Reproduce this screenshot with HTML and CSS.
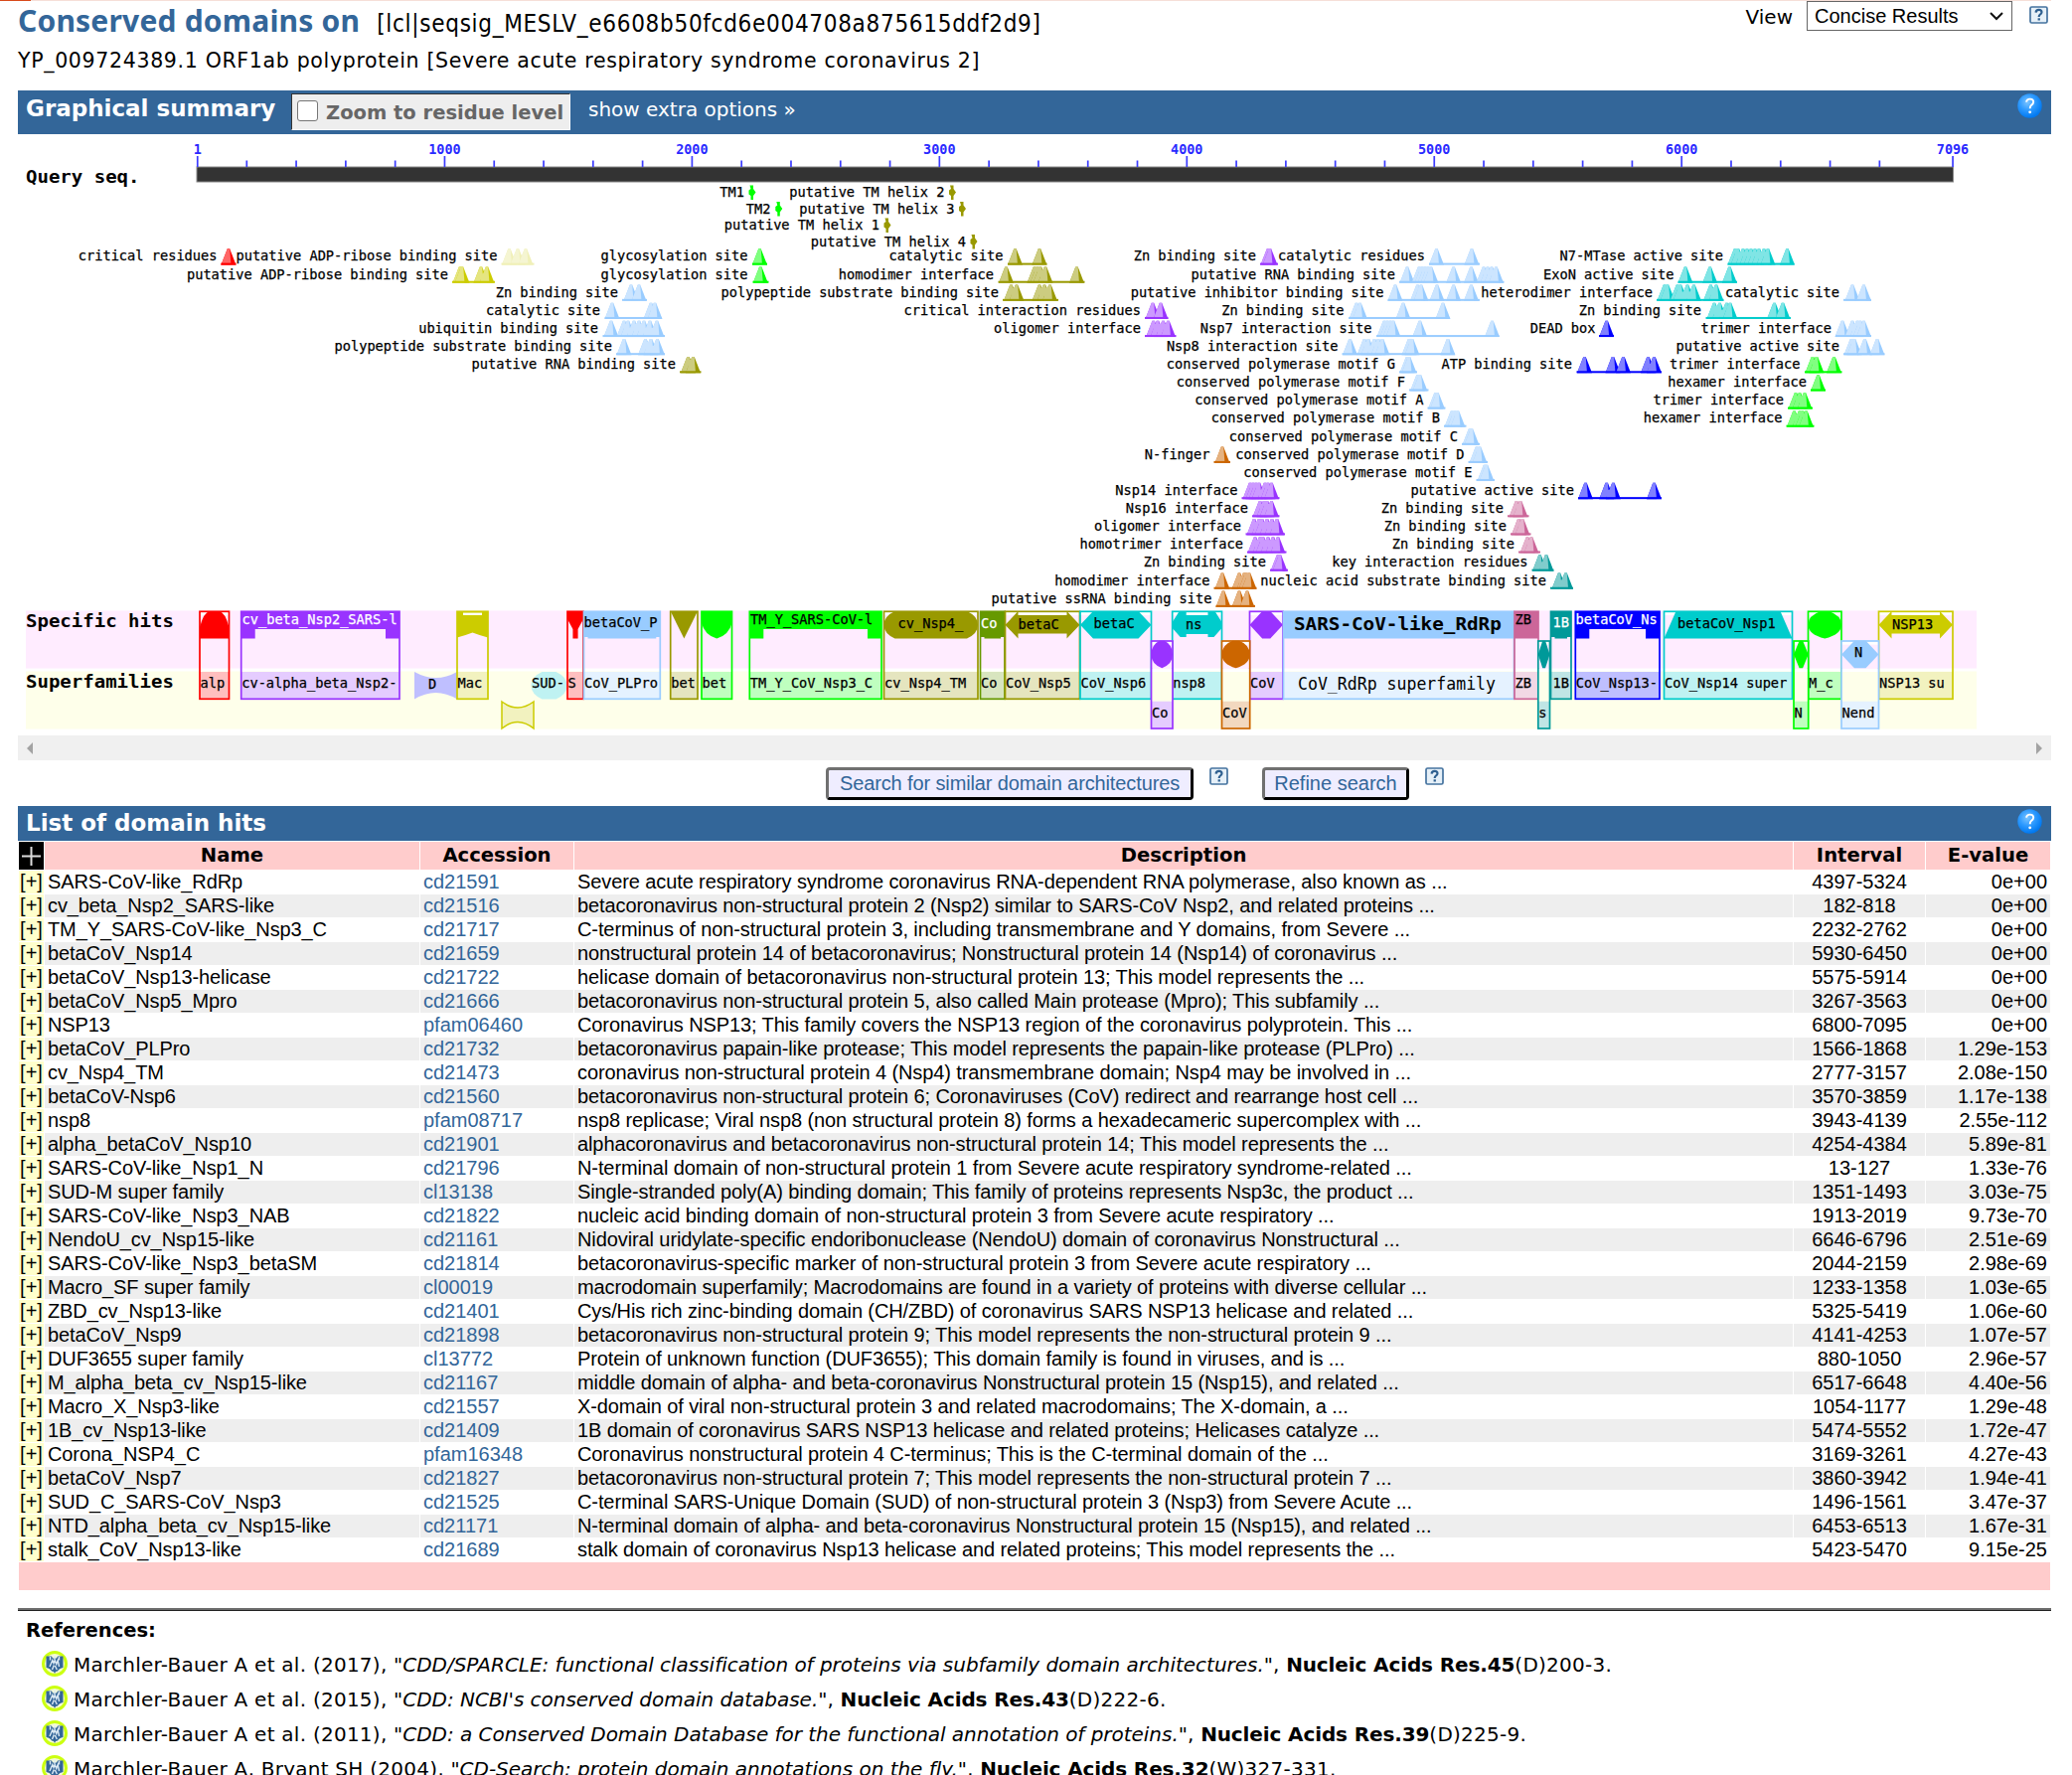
FILE: index.html
```html
<!DOCTYPE html>
<html lang="en">
<head>
<meta charset="utf-8">
<title>Conserved domains</title>
<link rel="stylesheet" href="styles.css">
</head>
<body>
<svg class="defs" aria-hidden="true">
  <defs>
    <radialGradient id="ball" cx="0.4" cy="0.35" r="0.65"><stop offset="0" stop-color="#7cc4ff"/><stop offset="0.5" stop-color="#2f9bff"/><stop offset="1" stop-color="#0078f0"/></radialGradient>
    <symbol id="round-help" viewBox="0 0 25 25"><circle cx="12.500" cy="12.500" r="12.200" fill="url(#ball)"/><path d="M9 8.600q.5-3 3.700-3 3.500 0 3.500 3 0 1.800-2 3.200-1.500 1.100-1.500 3.400" fill="none" stroke="#fff" stroke-width="1.900"/><circle cx="12.700" cy="18.800" r="1.400" fill="#fff"/></symbol>
    <symbol id="box-help" viewBox="0 0 19 18"><rect x="1" y="1" width="17" height="16" rx="1.500" fill="#e6f0f8" stroke="#45739f" stroke-width="1.700"/><path d="M6.600 6.600q.2-2.700 3-2.700 2.900 0 2.900 2.400 0 1.400-1.600 2.300-1.200.8-1.200 2.400" fill="none" stroke="#2f6090" stroke-width="2.200"/><rect x="8.600" y="12.300" width="2.300" height="2.200" fill="#2f6090"/></symbol>
    <symbol id="ref-logo" viewBox="0 0 26 26"><circle cx="13" cy="13" r="11.500" fill="#f4fad8" stroke="#ccff11" stroke-width="3"/><path d="M4.500 5.500h5.500l1 2h4l1-2h5.500v11.500q-4 .5-5.500 3.500l-2 .5-1 2-1-2-2-.5Q8.500 17.500 4.500 17z" fill="#336699"/><path d="M8.500 6v3.500M13 5v4M17.500 6v3.500M8 16l2.800-6.500 1.200 3 1.200-3 1.500 4 1.500-4 1.300 6.500M10.500 19l1.800-4.500M13.300 15l2 4" fill="none" stroke="#dceaf4" stroke-width="1.400"/></symbol>
  </defs>
</svg>
<div class="topline"><span></span></div>
<main class="page">
  <header class="head">
    <div class="titles">
      <h1><span class="title">Conserved domains on</span><span class="seqid">[lcl|seqsig_MESLV_e6608b50fcd6e004708a875615ddf2d9]</span></h1>
      <p class="defline">YP_009724389.1 ORF1ab polyprotein [Severe acute respiratory syndrome coronavirus 2]</p>
    </div>
    <div class="view">
      <span class="view-label">View</span>
      <div class="select"><span>Concise Results</span><svg width="14" height="9" viewBox="0 0 14 9"><path d="M1 1l6 6 6-6" fill="none" stroke="#111" stroke-width="2"/></svg></div>
      <svg class="box-help"><use href="#box-help"/></svg>
    </div>
  </header>

  <section class="bar graph-bar">
    <h2>Graphical summary</h2>
    <label class="zoom"><span class="check"></span><span class="zoom-text">Zoom to residue level</span></label>
    <a class="extra">show extra options »</a>
    <svg class="round-help"><use href="#round-help"/></svg>
  </section>
  <svg id="map" class="map" viewBox="18 135 2046 605"></svg>
  <div class="scroll"><i class="left"></i><i class="right"></i></div>

  <div class="actions">
    <button class="search">Search for similar domain architectures</button>
    <svg class="box-help"><use href="#box-help"/></svg>
    <button class="refine">Refine search</button>
    <svg class="box-help"><use href="#box-help"/></svg>
  </div>

  <section class="bar list-bar">
    <h2>List of domain hits</h2>
    <svg class="round-help"><use href="#round-help"/></svg>
  </section>
  <table class="hits">
    <colgroup><col class="c-plus"><col class="c-name"><col class="c-acc"><col class="c-desc"><col class="c-int"><col class="c-ev"></colgroup>
    <thead><tr><th class="expand"><svg width="19" height="19" viewBox="0 0 19 19"><path d="M9.500 0v19M0 9.500h19" stroke="#ddd" stroke-width="2"/></svg></th><th>Name</th><th>Accession</th><th>Description</th><th>Interval</th><th>E-value</th></tr></thead>
    <tbody id="rows"></tbody>
    <tfoot><tr><td colspan="6"></td></tr></tfoot>
  </table>
  <hr>
  <section class="refs">
    <h3>References:</h3>
    <ul>
      <li><svg><use href="#ref-logo"/></svg><p>Marchler-Bauer A et al. (2017), <i>"CDD/SPARCLE: functional classification of proteins via subfamily domain architectures."</i>, <b>Nucleic Acids Res.45</b>(D)200-3.</p></li>
      <li><svg><use href="#ref-logo"/></svg><p>Marchler-Bauer A et al. (2015), <i>"CDD: NCBI's conserved domain database."</i>, <b>Nucleic Acids Res.43</b>(D)222-6.</p></li>
      <li><svg><use href="#ref-logo"/></svg><p>Marchler-Bauer A et al. (2011), <i>"CDD: a Conserved Domain Database for the functional annotation of proteins."</i>, <b>Nucleic Acids Res.39</b>(D)225-9.</p></li>
      <li><svg><use href="#ref-logo"/></svg><p>Marchler-Bauer A, Bryant SH (2004), <i>"CD-Search: protein domain annotations on the fly."</i>, <b>Nucleic Acids Res.32</b>(W)327-331.</p></li>
    </ul>
  </section>
</main>
<script src="script.js"></script>
</body>
</html>
```
FILE: styles.css
```css
* { box-sizing: border-box; }
html, body { margin: 0; padding: 0; }
body { height: 1786px; overflow: hidden; background: #fff; color: #000; font-family: "DejaVu Sans", Verdana, sans-serif; font-size: 20px; }
h1, h2, h3, p, ul { margin: 0; padding: 0; font-weight: normal; }
.defs { display: block; width: 0; height: 0; }
.topline { height: 1px; background: #f6dfd8; margin-right: 21px; }
.topline span { display: block; width: 31px; height: 1px; background: #d84a1b; }
.page { width: 2046px; margin-left: 18px; }

.head { display: flex; justify-content: space-between; height: 90px; }
.head h1 { display: flex; align-items: baseline; gap: 17px; height: 45px; line-height: 40px; white-space: nowrap; }
.title { font: bold 30px/40px "Noto Sans", sans-serif; color: #336699; letter-spacing: .2px; }
.seqid { font-family: "DejaVu Sans Condensed", "DejaVu Sans", sans-serif; font-stretch: condensed; font-size: 24px; letter-spacing: .7px; }
.defline { font-size: 20.500px; letter-spacing: .67px; line-height: 30px; white-space: nowrap; }
.view { display: flex; align-items: flex-start; padding-right: 3px; }
.view-label { font: 20px/32px "DejaVu Sans", sans-serif; margin-right: 14px; }
.select { display: flex; align-items: center; justify-content: space-between; width: 207px; height: 30px; padding: 0 8px 0 7px; border: 1px solid #666; font: 20px "Liberation Sans", Arial, sans-serif; }
.view .box-help { margin: 5px 0 0 17px; }
.box-help { width: 19px; height: 18px; display: block; }
.round-help { width: 25px; height: 25px; display: block; margin-left: auto; }

.bar { display: flex; background: #336699; color: #fff; padding: 0 9px 0 8px; white-space: nowrap; }
.bar h2 { font-size: 23px; font-weight: bold; }
.graph-bar { height: 44px; }
.graph-bar h2 { line-height: 36px; width: 267px; }
.graph-bar .round-help { margin-top: 3px; }
.zoom { display: flex; align-items: center; width: 281px; height: 37px; margin-top: 3px; padding-left: 5px; background: #eee; border: 1px solid #fff; border-top-color: #333; border-left-color: #333; color: #666; font-size: 19.500px; font-weight: bold; }
.check { width: 21px; height: 21px; border: 1px solid #767676; border-radius: 3px; background: #fff; margin: 0 8px 3px 0; }
.zoom-text { padding-top: 2px; }
.extra { margin-left: 18px; line-height: 38px; }

.map { display: block; width: 2046px; height: 605px; font-family: "DejaVu Sans Mono", monospace; font-size: 13.500px; }
.map text { white-space: pre; }
.map .label { stroke: currentColor; stroke-width: .25px; }
.map .num { font-weight: bold; }
.map .big { font-size: 18px; }
.map .strong { font-weight: bold; }
.scroll { display: flex; justify-content: space-between; align-items: center; height: 25px; padding: 0 9px; background: #f0f0f0; }
.scroll i { border: 6px solid transparent; }
.scroll .left { border-right-color: #a3a3a3; border-left-width: 0; }
.scroll .right { border-left-color: #a3a3a3; border-right-width: 0; }

.actions { display: flex; height: 46px; padding: 7px 0 0 813px; }
.actions button { height: 33px; padding: 0; border: 3px outset #333; border-color: #707070 #1f1f24 #1f1f24 #707070; border-radius: 4px; background: #efedff; color: #336699; font: 20px "Liberation Sans", Arial, sans-serif; white-space: nowrap; }
.actions .search { width: 370px; letter-spacing: -.12px; }
.refine { width: 148px; margin-left: 34px; }
.actions .box-help { margin-left: 16px; }

.list-bar { height: 35px; }
.list-bar h2 { line-height: 34px; }
.list-bar .round-help { margin-top: 3px; }

.hits { width: 2046px; table-layout: fixed; border-collapse: separate; border-spacing: 1px; font: 20px/23px "Liberation Sans", Arial, sans-serif; }
.hits th, .hits td { padding: 0 3px; overflow: hidden; white-space: nowrap; }
.hits th { height: 28px; background: #ffcccc; font: bold 19.600px/28px "DejaVu Sans", Verdana, sans-serif; padding: 0; }
.hits .expand { background: #000; line-height: 0; }
.c-plus { width: 25px; } .c-name { width: 377px; } .c-acc { width: 154px; } .c-desc { width: 1226px; } .c-int { width: 132px; }
.hits td { height: 23px; }
.hits tbody tr:nth-child(even) td { background: #eee; }
.hits tbody tr td:first-child { background: #ffffcc; padding: 0; text-align: center; }
.hits td:nth-child(2), .hits td:nth-child(4) { letter-spacing: -.1px; }
.hits td:nth-child(3) { color: #336699; }
.hits td:nth-child(5) { text-align: center; }
.hits td:nth-child(6) { text-align: right; }
.hits tfoot td { height: 28px; background: #ffcccc; }

hr { height: 3px; margin: 17px 0 0; border: 0; background: #6b6b6b; border-bottom: 1px solid #222; }
.refs { padding-left: 8px; }
.refs h3 { font-size: 19.500px; font-weight: bold; line-height: 24px; padding-top: 8px; height: 37px; }
.refs ul { list-style: none; }
.refs li { display: flex; height: 35px; padding-left: 16px; white-space: nowrap; }
.refs li svg { width: 26px; height: 26px; margin: 3px 6px 0 0; flex: none; }
.refs li p { line-height: 35px; letter-spacing: .25px; }
.refs i { letter-spacing: -.03px; }
.refs b { letter-spacing: -.12px; }
```
FILE: script.js
```js
const INK = {
  red: ['#ff0000', '#ff6666', '#ffbfbf'], purple: ['#9933ff', '#cc99ff', '#e5ccff'],
  pale: ['#f0f0b8', '#f5f5d2', '#f5f5d2'], yellow: ['#cccc00', '#e5e580', '#f2f2bf'],
  sky: ['#99ccff', '#cce5ff', '#e5f2ff'], olive: ['#999900', '#cccc80', '#e5e5bf'],
  green: ['#00ff00', '#80ff80', '#bfffbf'], moss: ['#669900', '#b2cc80', '#d8e5bf'],
  aqua: ['#00cccc', '#80e5e5', '#bff2f2'], orange: ['#cc6600', '#e5b280', '#f2d8bf'],
  pink: ['#cc6699', '#e5b2cc', '#f2d8e5'], teal: ['#009999', '#80cccc', '#bfe5e5'],
  blue: ['#0000ff', '#8080ff', '#bfbfff']
};
const PITCH = 8.22;
const out = [];
const put = s => out.push(s);
const rect = (x, y, w, h, fill, extra = '') => put(`<rect x="${x}" y="${y}" width="${w}" height="${h}" fill="${fill}" ${extra}/>`);
const poly = (pts, fill) => put(`<polygon points="${pts}" fill="${fill}"/>`);
const text = (s, x, y, pitch = PITCH, cls = 'label', fill = '#000') =>
  put(`<text x="${x}" y="${y}" textLength="${s.length * pitch}" lengthAdjust="spacingAndGlyphs" class="${cls}" fill="${fill}" color="${fill}">${s}</text>`);

/* background bands */
rect(26, 614.5, 1963, 58, '#ffecff');
rect(26, 675.5, 1963, 58, '#feffea');

/* ruler */
const at = n => 198.7 + (n - 1) * 1766.3 / 7095;
rect(198, 168, 1767.5, 15, '#333', 'stroke="#888" stroke-width="1"');
const tick = (n, top) => rect(at(n) - 0.8, top, 1.7, 168 - top, '#3c3cff');
for (let n = 200; n < 7096; n += 200) if (n % 1000) tick(n, 161.5);
[1, 1000, 2000, 3000, 4000, 5000, 6000, 7096].forEach(n => {
  tick(n, 157);
  text(String(n), at(n) - String(n).length * 4.05, 154.7, 8.1, 'num', '#2a2aff');
});
text('Query seq.', 26, 184, 11.45, 'big strong');
text('Specific hits', 26, 631, 11.45, 'big strong');
text('Superfamilies', 26, 692, 11.45, 'big strong');

/* transmembrane helices: row, label, label end, marker x, ink */
[[0, 'TM1', 749, 756.5, 'green'], [0, 'putative TM helix 2', 950.5, 958, 'olive'],
 [1, 'TM2', 775.5, 783.3, 'green'], [1, 'putative TM helix 3', 960.5, 968, 'olive'],
 [2, 'putative TM helix 1', 885, 892.5, 'olive'], [3, 'putative TM helix 4', 972, 979.5, 'olive']
].forEach(([r, s, end, x, ink]) => {
  const y = 186.5 + r * 16.5;
  text(s, end - s.length * PITCH, y + 11.5);
  poly(`${x - 2},${y} ${x + 1.5},${y} ${x + 1.5},${y + 3.5} ${x + 4},${y + 7} ${x + 1.5},${y + 10.5} ${x + 1.5},${y + 14.5} ${x - 1},${y + 14.5} ${x - 1},${y + 10.5} ${x - 3},${y + 9} ${x - 3},${y + 5} ${x - 1},${y + 3.5}`, INK[ink][0]);
});

/* feature sites: row, label, label end, ink, base start, base end, peaks */
[[0, 'critical residues', 218.5, 'red', 222.3, 237.5, [230]],
 [0, 'putative ADP-ribose binding site', 500.5, 'pale', 504.5, 537.5, [512.5, 521, 529]],
 [0, 'glycosylation site', 752.5, 'green', 757, 772, [764.5]],
 [0, 'catalytic site', 1009.5, 'olive', 1014, 1053.5, [1021.5, 1046]],
 [0, 'Zn binding site', 1264, 'purple', 1268, 1286, [1276, 1278]],
 [0, 'catalytic residues', 1434, 'sky', 1438, 1489, [1445.5, 1481]],
 [0, 'N7-MTase active site', 1734, 'aqua', 1738.5, 1805.5, [1746, 1749, 1754, 1758, 1762, 1766, 1770, 1775, 1779, 1798.5]],
 [1, 'putative ADP-ribose binding site', 451, 'yellow', 455, 498, [463, 465, 484, 490]],
 [1, 'glycosylation site', 752.5, 'green', 757.5, 773.5, [765.3]],
 [1, 'homodimer interface', 1000, 'olive', 1004.5, 1091.5, [1012.5, 1041, 1044, 1047, 1052, 1083.5]],
 [1, 'putative RNA binding site', 1404, 'sky', 1408, 1513.5, [1416, 1428, 1431, 1434, 1437, 1440, 1462.7, 1480.5, 1493, 1497, 1501, 1505.5]],
 [1, 'ExoN active site', 1684.5, 'aqua', 1688.5, 1748, [1696, 1720.7, 1740.4]],
 [2, 'Zn binding site', 622, 'sky', 626, 651, [635, 643]],
 [2, 'polypeptide substrate binding site', 1005, 'olive', 1009, 1065, [1017.5, 1023, 1046, 1051, 1056.5]],
 [2, 'putative inhibitor binding site', 1392.5, 'sky', 1396.5, 1489, [1404, 1426.5, 1430, 1446, 1462.7, 1480.5]],
 [2, 'heterodimer interface', 1663, 'aqua', 1667, 1734.500, [1675, 1678, 1688, 1691, 1698, 1704.5, 1721.5, 1727]],
 [2, 'catalytic site', 1851, 'sky', 1855, 1883, [1864, 1875.5]],
 [3, 'catalytic site', 604, 'sky', 608.5, 666, [616, 655, 659]],
 [3, 'critical interaction residues', 1148, 'purple', 1152, 1175.5, [1160, 1168]],
 [3, 'Zn binding site', 1352.5, 'sky', 1357, 1459, [1365, 1368.5, 1412, 1452]],
 [3, 'Zn binding site', 1712, 'aqua', 1716.500, 1802, [1725, 1730.5, 1737.5, 1741, 1785.5, 1794]],
 [4, 'ubiquitin binding site', 602, 'sky', 606.500, 669, [615, 628, 632, 638, 643, 648, 654, 661]],
 [4, 'oligomer interface', 1148, 'purple', 1152, 1183.500, [1160.7, 1165, 1170.5, 1175.5]],
 [4, 'Nsp7 interaction site', 1380.5, 'sky', 1385, 1508.500, [1393, 1396, 1399, 1402, 1428.8, 1501.5]],
 [4, 'DEAD box', 1605.5, 'blue', 1609, 1624, [1616.7]],
 [4, 'trimer interface', 1843, 'sky', 1847, 1883, [1854, 1864, 1869, 1872, 1875.5]],
 [5, 'polypeptide substrate binding site', 616, 'sky', 620, 669, [628, 649.5, 655, 661.5]],
 [5, 'Nsp8 interaction site', 1346.5, 'sky', 1350.5, 1464, [1358.5, 1373, 1377, 1383, 1387, 1391, 1418, 1421, 1457]],
 [5, 'putative active site', 1851, 'sky', 1855, 1896.500, [1863, 1866, 1876.5, 1889]],
 [6, 'putative RNA binding site', 680, 'olive', 684, 705.500, [692.5, 697.5]],
 [6, 'conserved polymerase motif G', 1404, 'sky', 1408, 1426, [1416, 1418]],
 [6, 'ATP binding site', 1582, 'blue', 1586.500, 1672, [1594.5, 1623, 1633.5, 1658.5, 1664.5]],
 [6, 'trimer interface', 1811.5, 'green', 1816, 1853.5, [1824, 1828, 1845.5]],
 [7, 'conserved polymerase motif F', 1414, 'sky', 1418, 1437.500, [1426.5, 1429]],
 [7, 'hexamer interface', 1818, 'green', 1822, 1837, [1829.6]],
 [8, 'conserved polymerase motif A', 1432.5, 'sky', 1436.500, 1454.5, [1444.5, 1446.5]],
 [8, 'trimer interface', 1795, 'green', 1799, 1824, [1807, 1811, 1816]],
 [9, 'conserved polymerase motif B', 1449, 'sky', 1453, 1475.500, [1461, 1464, 1467]],
 [9, 'hexamer interface', 1793.5, 'green', 1797.500, 1825.5, [1805.5, 1811, 1814, 1817.5]],
 [10, 'conserved polymerase motif C', 1467, 'sky', 1471, 1489, [1479, 1481]],
 [11, 'N-finger', 1217.5, 'orange', 1221.500, 1238, [1230]],
 [11, 'conserved polymerase motif D', 1473.5, 'sky', 1477.500, 1497, [1486, 1489]],
 [12, 'conserved polymerase motif E', 1481.5, 'sky', 1485.500, 1504, [1494, 1496]],
 [13, 'Nsp14 interface', 1245.5, 'purple', 1249.500, 1287.5, [1258, 1261, 1264, 1267, 1273, 1276, 1279.5]],
 [13, 'putative active site', 1584, 'blue', 1588, 1672, [1595.5, 1616.7, 1623.4, 1664.5]],
 [14, 'Nsp16 interface', 1256, 'purple', 1260, 1287.5, [1268, 1272, 1275, 1279.5]],
 [14, 'Zn binding site', 1513, 'pink', 1517, 1538.5, [1526, 1530]],
 [15, 'oligomer interface', 1249, 'purple', 1253.500, 1293, [1262, 1267, 1270, 1275, 1280, 1285]],
 [15, 'Zn binding site', 1516, 'pink', 1520, 1540.5, [1528.3, 1532]],
 [16, 'homotrimer interface', 1251, 'purple', 1255, 1294.5, [1263, 1268, 1271, 1276, 1281, 1286]],
 [16, 'Zn binding site', 1524, 'pink', 1528, 1550, [1537, 1541]],
 [17, 'Zn binding site', 1274, 'purple', 1278, 1296, [1286, 1288]],
 [17, 'key interaction residues', 1537.5, 'teal', 1541.500, 1563.5, [1549.5, 1556]],
 [18, 'homodimer interface', 1217.5, 'orange', 1221.500, 1264.5, [1230, 1247, 1252, 1254, 1257]],
 [18, 'nucleic acid substrate binding site', 1556, 'teal', 1560, 1583, [1569, 1575.6]],
 [19, 'putative ssRNA binding site', 1219.5, 'orange', 1223.500, 1263, [1231, 1247, 1255]]
].forEach(([row, s, end, ink, x1, x2, peaks]) => {
  const base = 266.6 + row * 18.12, top = base - 16.3, [dark, light] = INK[ink];
  text(s, end - s.length * PITCH, base - 4.2);
  peaks.forEach((x, i) => {
    poly(`${x - 7.5},${base} ${x - 1.2},${top} ${x + 1.2},${top} ${x + 7.5},${base}`, dark);
    poly(`${x - 7.5},${base} ${x - 1.2},${top} ${x + 1.2},${top} ${x + 2.5},${base}`, light);
    /* neighbouring peaks merge into one plateau */
    const gap = i ? x - peaks[i - 1] : 99;
    if (gap <= 7) {
      const cut = top + (gap > 5.5 ? 7 : gap > 3.2 ? 3 : 0), p = peaks[i - 1];
      poly(`${p},${cut} ${x},${cut} ${x},${base} ${p},${base}`, light);
    }
  });
  rect(x1, base - 2, x2 - x1, 2, dark);
});

/* domain silhouettes inside a w x h cell */
const SHAPES = {
  rect: (w, h) => `M0 0H${w}V${h}H0Z`,
  trim: (w, h) => `M0 0H${w}V${h - 1.5}H${w - 4}V${h}H4V${h - 1.5}H0Z`,
  dome: (w, h) => `M0 ${h}V16Q4 1 10 0H${w - 10}Q${w - 4} 1 ${w} 16V${h}Z`,
  bowl: (w, h) => `M0 0H${w}V12Q${w - 3} 24 ${w / 2} ${h}Q3 24 0 12Z`,
  bracket: (w, h) => `M0 0H${w}V${h}H${w - 14}V18H14V${h}H0Z`,
  pinch: (w, h) => `M0 0Q${w / 2} 12 ${w} 0V${h}Q${w / 2} ${h - 13} 0 ${h}Z`,
  mac: (w, h) => `M0 0H${w}V${h - 1}Q${w * .75} ${h - 3} ${w / 2} ${h - 6}Q${w / 4} ${h - 3} 0 ${h - 1}Z`,
  spike: (w, h) => `M0 0H${w}V8L${w * .66} 18V${h}H${w * .34}V18L0 8Z`,
  tri: (w, h) => `M0 0H${w}L${w / 2} ${h}Z`,
  pill: (w, h) => `M11 0H${w - 11}Q${w} 5 ${w} ${h / 2}Q${w} ${h - 5} ${w - 11} ${h}H11Q0 ${h - 5} 0 ${h / 2}Q0 5 11 0Z`,
  arrow: (w, h) => `M0 ${h / 2}L13 0V4H${w - 13}V0L${w} ${h / 2}L${w - 13} ${h}V${h - 5}H13V${h}Z`,
  hex: (w, h) => `M0 ${h / 2}L13 0H${w - 13}L${w} ${h / 2}L${w - 13} ${h}H13Z`,
  knob: (w, h) => `M0 11L7 0H14V4H${w - 14}V0H${w - 7}L${w} 11V17L${w - 8} 26H${w - 14}V23H14V26H8L0 17Z`,
  oval: (w, h) => `M0 ${h / 2}Q0 ${h * .15} ${w * .38} 0H${w * .62}Q${w} ${h * .15} ${w} ${h / 2}Q${w} ${h * .85} ${w / 2} ${h}Q0 ${h * .85} 0 ${h / 2}Z`,
  gem: (w, h) => `M0 ${h / 2}L${w * .38} 0H${w * .62}L${w} ${h / 2}L${w * .62} ${h}H${w * .38}Z`,
  trap: (w, h) => `M0 ${h}L12 0H${w - 12}L${w} ${h}Z`
};
const shape = (name, x, y, w, h, fill, extra = '') =>
  put(`<path transform="translate(${x} ${y})" d="${SHAPES[name](w, h)}" fill="${fill}" ${extra}/>`);

/* superfamily-only domains */
shape('pinch', 417, 676, 43, 27.5, '#bfbfff');
text('D', 431, 693);
shape('pinch', 505, 706, 32, 27, '#f2f2bf', 'stroke="#cccc00" stroke-width="1.500"');
shape('pill', 534.5, 676, 36, 27.500, '#bff2f2');
text('SUD-', 535, 692);

/* specific hits: x1, x2, ink, shape, hit label, label x, label y, label fill, superfamily label, lower lane */
[[201, 230.5, 'red', 'dome', '', 0, 0, '', 'alp'],
 [242.7, 402, 'purple', 'bracket', 'cv_beta_Nsp2_SARS-l', 243.5, 628, '#fff', 'cv-alpha_beta_Nsp2-'],
 [460, 491, 'yellow', 'mac', '', 0, 0, '', 'Mac'],
 [571, 587, 'red', 'spike', '', 0, 0, '', 'S'],
 [587.5, 664.3, 'sky', 'trim', 'betaCoV_P', 587.5, 631.3, '#000', 'CoV_PLPro'],
 [674.7, 702, 'olive', 'tri', '', 0, 0, '', 'bet'],
 [706, 736.5, 'green', 'bowl', '', 0, 0, '', 'bet'],
 [754.3, 887, 'green', 'bracket', 'TM_Y_SARS-CoV-l', 755, 628, '#000', 'TM_Y_CoV_Nsp3_C'],
 [889.5, 984, 'olive', 'pill', 'cv_Nsp4_', 903.5, 631.5, '#000', 'cv_Nsp4_TM'],
 [986.5, 1011, 'moss', 'trim', 'Co', 987, 631.5, '#fff', 'Co'],
 [1011.5, 1086.5, 'olive', 'arrow', 'betaC', 1024.5, 633, '#000', 'CoV_Nsp5'],
 [1087, 1158.5, 'aqua', 'hex', 'betaC', 1100.5, 631.5, '#000', 'CoV_Nsp6'],
 [1179.7, 1229.5, 'aqua', 'knob', 'ns', 1193, 633, '#000', 'nsp8'],
 [1257.5, 1291, 'purple', 'gem', '', 0, 0, '', 'CoV'],
 [1291.5, 1523.5, 'sky', 'rect', '', 0, 0, '', ''],
 [1524, 1548, 'pink', 'rect', 'ZB', 1524.5, 628, '#000', 'ZB'],
 [1560.5, 1581, 'teal', 'trim', '1B', 1562.5, 631, '#fff', '1B'],
 [1585.3, 1670, 'blue', 'bracket', 'betaCoV_Ns', 1585.5, 628, '#fff', 'CoV_Nsp13-'],
 [1674.500, 1803.5, 'aqua', 'trap', 'betaCoV_Nsp1', 1688, 631.5, '#000', 'CoV_Nsp14 super'],
 [1819.500, 1853, 'green', 'oval', '', 0, 0, '', 'M_c'],
 [1890.500, 1965, 'yellow', 'arrow', 'NSP13', 1904, 633, '#000', 'NSP13 su'],
 [1158.500, 1180, 'purple', 'oval', '', 0, 0, '', 'Co', 1],
 [1229.500, 1257.7, 'orange', 'oval', '', 0, 0, '', 'CoV', 1],
 [1547.800, 1559.5, 'teal', 'gem', '', 0, 0, '', 's', 1],
 [1805, 1819.7, 'green', 'gem', '', 0, 0, '', 'N', 1],
 [1853, 1890.500, 'sky', 'hex', 'N', 1866, 660.500, '#000', 'Nend', 1]
].forEach(([x1, x2, ink, name, hit, hx, hy, hfill, fam, low]) => {
  const [dark, , tint] = INK[ink], d = low ? 29.7 : 0, w = x2 - x1, y = 615 + d;
  if (low) { rect(x1, y, w, 28, '#ffecff'); rect(x1, 673, w, 3, '#fff'); rect(x1, 676, w, 29, '#feffea'); }
  if (/rect|trim|bracket|mac/.test(name) === false) rect(x1, y, w, 4, '#fff');
  rect(x1, 676 + d, w, 27, tint);
  shape(name, x1, y, w, 27.5, dark);
  if (name === 'mac') rect(x1 + 6, y + 1.5, w - 12, 2.5, '#fff');
  rect(x1, y + .3, w, 88, 'none', `stroke="${dark}" stroke-width="1.700"`);
  if (hit) text(hit, hx, hy, PITCH, 'label', hfill);
  if (fam) text(fam, x1 + (fam === '1B' ? 2 : .5), 692 + d);
});
text('SARS-CoV-like_RdRp', 1302, 634, 11.6, 'big strong');
text('CoV_RdRp superfamily', 1306, 693.500, 9.95, 'big');
document.getElementById('map').innerHTML = out.join('');

/* hit list */
const HITS = `SARS-CoV-like_RdRp|cd21591|Severe acute respiratory syndrome coronavirus RNA-dependent RNA polymerase, also known as ...|4397-5324|0e+00
cv_beta_Nsp2_SARS-like|cd21516|betacoronavirus non-structural protein 2 (Nsp2) similar to SARS-CoV Nsp2, and related proteins ...|182-818|0e+00
TM_Y_SARS-CoV-like_Nsp3_C|cd21717|C-terminus of non-structural protein 3, including transmembrane and Y domains, from Severe ...|2232-2762|0e+00
betaCoV_Nsp14|cd21659|nonstructural protein 14 of betacoronavirus; Nonstructural protein 14 (Nsp14) of coronavirus ...|5930-6450|0e+00
betaCoV_Nsp13-helicase|cd21722|helicase domain of betacoronavirus non-structural protein 13; This model represents the ...|5575-5914|0e+00
betaCoV_Nsp5_Mpro|cd21666|betacoronavirus non-structural protein 5, also called Main protease (Mpro); This subfamily ...|3267-3563|0e+00
NSP13|pfam06460|Coronavirus NSP13; This family covers the NSP13 region of the coronavirus polyprotein. This ...|6800-7095|0e+00
betaCoV_PLPro|cd21732|betacoronavirus papain-like protease; This model represents the papain-like protease (PLPro) ...|1566-1868|1.29e-153
cv_Nsp4_TM|cd21473|coronavirus non-structural protein 4 (Nsp4) transmembrane domain; Nsp4 may be involved in ...|2777-3157|2.08e-150
betaCoV-Nsp6|cd21560|betacoronavirus non-structural protein 6; Coronaviruses (CoV) redirect and rearrange host cell ...|3570-3859|1.17e-138
nsp8|pfam08717|nsp8 replicase; Viral nsp8 (non structural protein 8) forms a hexadecameric supercomplex with ...|3943-4139|2.55e-112
alpha_betaCoV_Nsp10|cd21901|alphacoronavirus and betacoronavirus non-structural protein 14; This model represents the ...|4254-4384|5.89e-81
SARS-CoV-like_Nsp1_N|cd21796|N-terminal domain of non-structural protein 1 from Severe acute respiratory syndrome-related ...|13-127|1.33e-76
SUD-M super family|cl13138|Single-stranded poly(A) binding domain; This family of proteins represents Nsp3c, the product ...|1351-1493|3.03e-75
SARS-CoV-like_Nsp3_NAB|cd21822|nucleic acid binding domain of non-structural protein 3 from Severe acute respiratory ...|1913-2019|9.73e-70
NendoU_cv_Nsp15-like|cd21161|Nidoviral uridylate-specific endoribonuclease (NendoU) domain of coronavirus Nonstructural ...|6646-6796|2.51e-69
SARS-CoV-like_Nsp3_betaSM|cd21814|betacoronavirus-specific marker of non-structural protein 3 from Severe acute respiratory ...|2044-2159|2.98e-69
Macro_SF super family|cl00019|macrodomain superfamily; Macrodomains are found in a variety of proteins with diverse cellular ...|1233-1358|1.03e-65
ZBD_cv_Nsp13-like|cd21401|Cys/His rich zinc-binding domain (CH/ZBD) of coronavirus SARS NSP13 helicase and related ...|5325-5419|1.06e-60
betaCoV_Nsp9|cd21898|betacoronavirus non-structural protein 9; This model represents the non-structural protein 9 ...|4141-4253|1.07e-57
DUF3655 super family|cl13772|Protein of unknown function (DUF3655); This domain family is found in viruses, and is ...|880-1050|2.96e-57
M_alpha_beta_cv_Nsp15-like|cd21167|middle domain of alpha- and beta-coronavirus Nonstructural protein 15 (Nsp15), and related ...|6517-6648|4.40e-56
Macro_X_Nsp3-like|cd21557|X-domain of viral non-structural protein 3 and related macrodomains; The X-domain, a ...|1054-1177|1.29e-48
1B_cv_Nsp13-like|cd21409|1B domain of coronavirus SARS NSP13 helicase and related proteins; Helicases catalyze ...|5474-5552|1.72e-47
Corona_NSP4_C|pfam16348|Coronavirus nonstructural protein 4 C-terminus; This is the C-terminal domain of the ...|3169-3261|4.27e-43
betaCoV_Nsp7|cd21827|betacoronavirus non-structural protein 7; This model represents the non-structural protein 7 ...|3860-3942|1.94e-41
SUD_C_SARS-CoV_Nsp3|cd21525|C-terminal SARS-Unique Domain (SUD) of non-structural protein 3 (Nsp3) from Severe Acute ...|1496-1561|3.47e-37
NTD_alpha_beta_cv_Nsp15-like|cd21171|N-terminal domain of alpha- and beta-coronavirus Nonstructural protein 15 (Nsp15), and related ...|6453-6513|1.67e-31
stalk_CoV_Nsp13-like|cd21689|stalk domain of coronavirus Nsp13 helicase and related proteins; This model represents the ...|5423-5470|9.15e-25`;
document.getElementById('rows').innerHTML = HITS.split('\n')
  .map(r => `<tr><td>[+]</td>${r.split('|').map(c => `<td>${c}</td>`).join('')}</tr>`).join('');
```
